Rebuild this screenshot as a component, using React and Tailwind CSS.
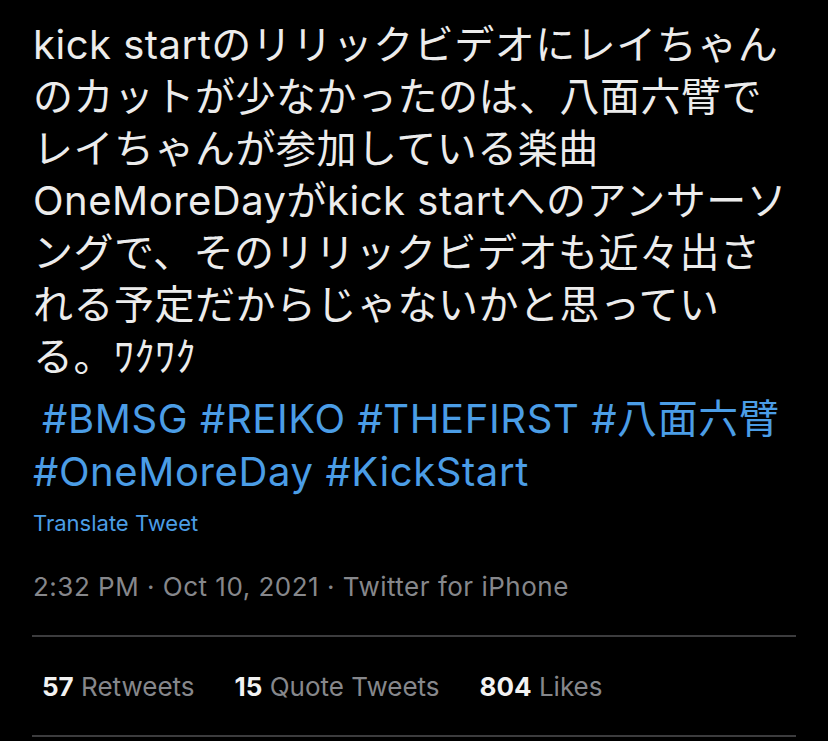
import React from 'react';

const BODY_LINES = [
  'kick startのリリックビデオにレイちゃん',
  'のカットが少なかったのは、八面六臂で',
  'レイちゃんが参加している楽曲',
  'OneMoreDayがkick startへのアンサーソ',
  'ングで、そのリリックビデオも近々出さ',
  'れる予定だからじゃないかと思ってい',
  'る。ﾜｸﾜｸ',
];

function Stat({ count, label }) {
  return (
    <span className="whitespace-nowrap">
      <span className="font-bold text-[#f2f2f2]">{count}</span>
      <span className="text-[#86878b]"> {label}</span>
    </span>
  );
}

export default function App() {
  return (
    <div className="h-[741px] w-[828px] overflow-hidden bg-black font-['Inter','Noto_Sans_CJK_JP',sans-serif]">
      <div className="px-[32px] pt-[19px]">
        {/* tweet body */}
        <p className="whitespace-nowrap pl-px text-[40px] leading-[52px] tracking-[0.5px] text-[#ececec]">
          {BODY_LINES.map((line, i) => (
            <React.Fragment key={i}>
              {line}
              {i < BODY_LINES.length - 1 && <br />}
            </React.Fragment>
          ))}
        </p>

        {/* hashtags */}
        <p className="mt-[9px] whitespace-nowrap pl-px text-[40px] leading-[53px] tracking-[0.6px] text-[#4b9de6]">
          <span className="pl-[9px]">#BMSG #REIKO #THEFIRST #八面六臂</span>
          <br />
          #OneMoreDay #KickStart
        </p>

        <div className="mt-[10px] pl-px text-[22px] leading-[30px] text-[#4b9de6]">Translate Tweet</div>

        <div className="mt-[32px] pl-px text-[26px] leading-[34px] tracking-[0.5px] text-[#86878b]">
          2:32 PM · Oct 10, 2021 · Twitter for iPhone
        </div>

        {/* counts */}
        <div className="mt-[31px] border-y-2 border-[#3c3c3e]">
          <div className="flex h-[98px] items-center gap-[40px] pl-[10px] text-[26px]">
            <Stat count="57" label="Retweets" />
            <Stat count="15" label="Quote Tweets" />
            <Stat count="804" label="Likes" />
          </div>
        </div>
      </div>
    </div>
  );
}
